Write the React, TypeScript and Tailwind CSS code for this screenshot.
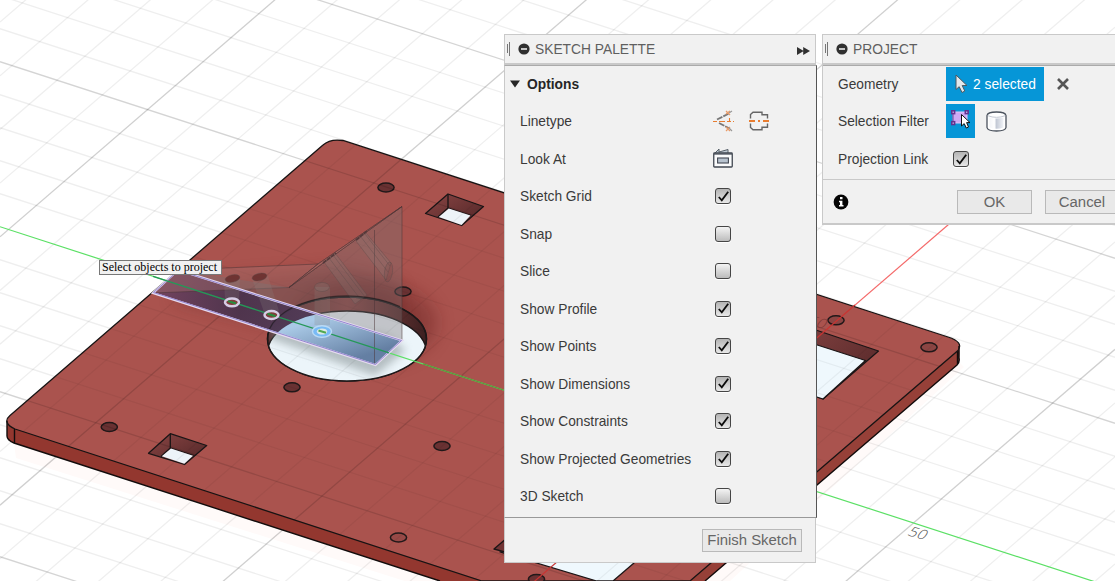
import type { ReactNode } from "react";

const W = 1115;
const GRID_A = 0.3243;
const GRID_B = -0.862;

function GridLines() {
  const lines: ReactNode[] = [];
  for (let k = -13; k <= 11; k++) {
    if (k === 0) continue;
    const y = 226.7 + 33 * k;
    lines.push(
      <line key={"a" + k} x1={0} y1={y} x2={W} y2={y + GRID_A * W} stroke="#000" strokeOpacity={k % 5 === 0 ? 0.17 : 0.065} strokeWidth={1.3} />
    );
  }
  for (let k = -19; k <= 9; k++) {
    if (k === 0) continue;
    const y = 1042 + 53.68 * k;
    lines.push(
      <line key={"b" + k} x1={0} y1={y} x2={W} y2={y + GRID_B * W} stroke="#000" strokeOpacity={k % 5 === 0 ? 0.19 : 0.065} strokeWidth={1.3} />
    );
  }
  return <g>{lines}</g>;
}

const HOLES = [
  [386, 187.5], [403, 291.5], [292, 387.3], [109.3, 427], [442, 446], [398.5, 537.5], [836, 320.3], [929, 347.3], [536.5, 579],
];

const TOP_FACE =
  "M7 422 Q6 419 10 415.5 L323 145 Q330 138.5 343 140.5 L948 337 Q964 342 958 350.5 L690 581 L482 581 L15 429 Q8 426 7 422Z";

function Scene() {
  return (
    <svg className="absolute inset-0" width="1115" height="581" viewBox="0 0 1115 581">
      <defs>
        <clipPath id="bigHole"><ellipse cx="347" cy="339" rx="79" ry="42" /></clipPath>
        <clipPath id="opening" clipPath="url(#bigHole)"><ellipse cx="347" cy="353" rx="79.5" ry="42" /></clipPath>
        <clipPath id="plate"><path d={TOP_FACE} /></clipPath>
        <linearGradient id="wall" x1="0" x2="1">
          <stop offset="0" stopColor="#582b2c" />
          <stop offset=".5" stopColor="#8d4543" />
          <stop offset="1" stopColor="#3c2021" />
        </linearGradient>
        <linearGradient id="strip" x1="153" y1="290" x2="402" y2="345" gradientUnits="userSpaceOnUse">
          <stop offset="0" stopColor="#6e4260" />
          <stop offset=".35" stopColor="#49334e" />
          <stop offset="1" stopColor="#584767" />
        </linearGradient>
        <linearGradient id="stripOpen" x1="330" y1="315" x2="345" y2="362" gradientUnits="userSpaceOnUse">
          <stop offset="0" stopColor="#a9c9e6" />
          <stop offset="1" stopColor="#647fa3" />
        </linearGradient>
        <linearGradient id="pocket" x1="0" y1="0" x2="1" y2="1">
          <stop offset="0" stopColor="#8a4544" />
          <stop offset="1" stopColor="#4f2526" />
        </linearGradient>
        <filter id="soft" x="-20%" y="-20%" width="140%" height="140%"><feGaussianBlur stdDeviation="4" /></filter>
        <filter id="softer" x="-50%" y="-50%" width="200%" height="200%"><feGaussianBlur stdDeviation="9" /></filter>
      </defs>
      <rect width="1115" height="581" fill="#fff" />
      <path d="M14 443 L440 581 L490 608 L16 458Z M705 581 L959 362 L964 367 L730 581Z" fill="#fffaf9" />
      <GridLines />
      <line x1="0" y1="1042" x2="1115" y2="81" stroke="#f46a6a" strokeWidth="1.2" />

      <path d="M7 421 V436 Q7 440 14 443 L440 581 H705 L957 365 Q960 362 959 346 L700 470 Z" fill="#93372f" />
      <path d="M958 350 L690 581 H705 L957 365 Q960 363 959 346Z" fill="#964038" />
      <path d={TOP_FACE} fill="#aa534e" />
      <g clipPath="url(#plate)">
        <ellipse cx="365" cy="323" rx="72" ry="42" fill="#571717" opacity=".36" filter="url(#softer)" />
        <path d="M195 282 L340 268 L400 285 L405 330 L320 338 L170 300Z" fill="#541c1c" opacity=".3" filter="url(#softer)" />
      </g>
      <path d="M7 421 V436 Q7 440 14 443 L440 581 M14.5 429 V443 M705 581 L957 365 Q960 362 959 358 V346 M957.5 351 V364" fill="none" stroke="#120c0c" strokeWidth="1.4" />
      <path d={TOP_FACE} fill="none" stroke="#181414" strokeWidth="1.3" />

      <g stroke="#1b1516" strokeWidth="1.3" strokeLinejoin="round">
        <path d="M448 194 L483.5 206.5 L461.7 225.5 L425.5 213.5Z" fill="url(#pocket)" />
        <path d="M448 194 V208 L471 215.5 M448 208 L438 217" fill="none" />
        <path d="M170.3 433.7 L206.7 445.5 L184.5 464.5 L148.5 453.3Z" fill="url(#pocket)" />
        <path d="M170.3 434 V448 L193.5 455.5 M170.3 448 L161 456.5" fill="none" />
        <path d="M780 318 L878.5 351 L823 399 L780 385Z" fill="url(#pocket)" />
        <path d="M780 333 L865.5 360.5 L823 399 L780 385Z" fill="#eff8fd" />
        <path d="M515 531 L494 549 L520 556Z" fill="#713334" />
        <path d="M500 552 L596.7 581 L613 581 L634 563 L650 540Z" fill="#eff8fd" />
      </g>
      <path d="M448.8 208.5 L470.5 215.5 L461.5 225 L438.8 217Z M171 448.5 L193 455.7 L184.3 463.8 L161.8 456.3Z" fill="#edf3f8" />

      {HOLES.map(([x, y]) => (
        <ellipse key={x} cx={x} cy={y} rx="8.1" ry="4.5" fill={x > 800 ? "#8b4543" : x === 398.5 ? "#974947" : "#693132"} stroke="#211819" strokeWidth="1.5" />
      ))}

      <ellipse cx="347" cy="339" rx="79.5" ry="42" fill="url(#wall)" stroke="#1d1819" strokeWidth="1.5" />
      <g clipPath="url(#bigHole)">
        <ellipse cx="347" cy="353" rx="79.5" ry="42" fill="#ecf5fa" stroke="#1d1819" strokeWidth="1.3" />
        <path d="M268 338 L375 376 L406 350 L385 335 L330 330 L270 328Z" fill="#7b8688" opacity=".5" filter="url(#soft)" />
      </g>
      <ellipse cx="347" cy="339" rx="79.5" ry="42" fill="none" stroke="#1d1819" strokeWidth="1.3" />

      <g clipPath="url(#plate)" opacity=".75"><GridLines /></g>

      <line x1="520" y1="593.8" x2="855" y2="305" stroke="#c93432" strokeWidth="1.2" />
      <line x1="0" y1="226.7" x2="1115" y2="588.3" stroke="#5be065" strokeWidth="1.2" />
      <line x1="423" y1="363.9" x2="505" y2="390.5" stroke="#5f963c" strokeWidth="1.3" />

      <path d="M153 293 L178 270 L402 340.5 L375.5 365Z" fill="url(#strip)" fillOpacity=".92" />
      <g clipPath="url(#opening)">
        <path d="M153 293 L178 270 L402 340.5 L375.5 365Z" fill="url(#stripOpen)" />
      </g>
      <g stroke="#4a3435" strokeOpacity=".5" strokeWidth="1">
        <path d="M178 270 L318 264 L289 287.5 L153 293Z" fill="#a6706d" fillOpacity=".42" />
        <path d="M178 270 L289 287.5 L402 206.5 V340.5Z" fill="#777071" fillOpacity=".36" stroke="none" />
        <path d="M289 287.5 L402 206.5 V340 M289 287.5 L318 264 L402 206.5 M374.5 230 V364" fill="none" />
        <path d="M318 264 L402 206.5 L289 287.5Z" fill="#b98682" fillOpacity=".4" />
      </g>
      <g fill="#898381" fillOpacity=".22" stroke="#594a4a" strokeOpacity=".4" strokeWidth=".9">
        <path d="M224 280 L225 300 Q232 305 239 300 L240 278Z" stroke="none" />
        <path d="M252 279 L264 312 Q273 316 279 311 L268 276Z" stroke="none" />
        <path d="M314.5 287 V325 H330 V287Z" stroke="none" />
        <ellipse cx="322" cy="287" rx="7.5" ry="4.5" />
        <path d="M324 262 L335 253 L367 295 L355 304Z M329 258 L361 300 M333 255 L365 297" />
        <path d="M356 241 L366 233 L391 263 L386 280Z M361 237 L388 272 M365 234 L390 266" />
        <ellipse cx="388.5" cy="272" rx="4" ry="10" transform="rotate(8 388.5 272)" fill="#713f3e" />
        <ellipse cx="232.5" cy="278.5" rx="7.5" ry="3.7" transform="rotate(-12 232.5 278.5)" fill="#69302f" fillOpacity=".9" />
        <ellipse cx="259.5" cy="277" rx="7.5" ry="3.7" transform="rotate(-12 259.5 277)" fill="#69302f" fillOpacity=".9" />
      </g>
      <path d="M268 341 A79.5 42 0 0 1 400 306.5" fill="none" stroke="#1d1819" strokeOpacity=".6" strokeWidth="1.2" />
      <path d="M323 263 L336 253 M356 240 L367 231" stroke="#54393a" strokeWidth="1.8" strokeDasharray="4 1" />
      <path d="M153 293 L178 270 L402 340.5 L375.5 365Z" fill="none" stroke="#e6dbf0" strokeWidth="2.3" />
      <path d="M153.5 292.5 L178.5 270.5 L401.5 340.5 L375.5 364.5Z" fill="none" stroke="#8a7cce" strokeWidth=".9" />
      <line x1="153" y1="276.3" x2="389" y2="352.9" stroke="#259858" strokeWidth="1.3" />
      <g fill="#813f3d">
        {[[232, 302.3], [271.5, 315]].map(([x, y]) => (
          <g key={x}>
            <ellipse cx={x} cy={y} rx="7" ry="3.9" stroke="#d7cde6" strokeWidth="2.5" />
            <path d={`M${x - 4} ${y - 1.2} L${x + 4} ${y + 1.2}`} stroke="#258d3e" strokeWidth="2" />
          </g>
        ))}
      </g>
      <ellipse cx="322" cy="331.5" rx="9.5" ry="5.8" fill="#78baf5" stroke="#bbdaf5" strokeWidth="1.4" />
      <ellipse cx="322" cy="331.5" rx="5.2" ry="3.1" fill="#dce9e8" />
      <path d="M318.5 330.5 L326 332.8" stroke="#50a951" strokeWidth="2.2" />

      <text x="0" y="0" transform="matrix(.95 .27 -.55 .75 906.5 535)" fontFamily="'Open Sans', sans-serif" fontSize="16" fontWeight="300" fill="#555">50</text>
      <text x="0" y="0" transform="matrix(.95 .27 -.55 .75 806 324)" fontFamily="'Open Sans', sans-serif" fontSize="16" fontWeight="300" fill="#7d3836">50</text>
    </svg>
  );
}

function Checkbox({ on = false }: { on?: boolean }) {
  return (
    <span className={"relative top-[0.5px] flex size-4 items-center justify-center rounded-[3px] border-[1.5px] border-[#454545] shadow-[0_1px_0_#fff] " + (on ? "bg-linear-to-b from-[#b4b4b4] to-[#e8e8e8]" : "bg-linear-to-b from-[#f4f4f4] to-[#bcbcbc]")}>
      {on && (
        <svg width="13" height="13" viewBox="0 0 13 13" className="shrink-0">
          <path d="M1.8 7 L4.8 10.4 L11.2 1.8" fill="none" stroke="#0c0c0c" strokeWidth="1.8" />
        </svg>
      )}
    </span>
  );
}

function Header({ title, expand = false }: { title: string; expand?: boolean }) {
  return (
    <div className="flex h-[30px] shrink-0 items-center border-b-2 border-[#c9c9c9] pl-[2px] pr-[5px] text-[13.8px] text-[#5f5f5f]">
      <svg width="5" height="16" viewBox="0 0 5 16" className="mr-[6px]">
        <path d="M.5 3 V12 M2.5 1 V15" stroke="#777" />
      </svg>
      <svg width="12" height="12" viewBox="0 0 12 12" className="mr-[5px]">
        <circle cx="6" cy="6" r="5.6" fill="#303030" />
        <path d="M3 6 H9" stroke="#eee" strokeWidth="1.6" />
      </svg>
      <span className="pt-[2px] leading-[18px]">{title}</span>
      {expand && (
        <svg width="13" height="8" viewBox="0 0 13 8" className="mt-[3px] ml-auto">
          <path d="M0 0 L6.7 4 L0 8Z M6.2 0 L13 4 L6.2 8Z" fill="#303030" />
        </svg>
      )}
    </div>
  );
}

function LinetypeIcons() {
  return (
    <div className="flex items-center gap-[15px] pl-px">
      <svg width="21" height="22" viewBox="0 0 21 22">
        <path d="M4 9.5 L15.5 3.8 M6 13 L16 18.2" stroke="#777" strokeWidth="1.8" strokeDasharray="6 1" />
        <path d="M0 11.5 H21" stroke="#e87d30" strokeWidth="1.1" strokeDasharray="4 2 6 2" />
        <path d="M16.5 8 V12" stroke="#e87d30" strokeWidth="1.1" />
        <path d="M13 1 L17 5 M17 1 L13 4 M13 17 L17 21 M17 17 L13 21" stroke="#e99b68" strokeWidth="1.2" />
        <path d="M16 3 L19 1 M16 18 L19 21" stroke="#999" strokeWidth="1.2" />
      </svg>
      <svg width="20" height="20" viewBox="0 0 20 20">
        <path d="M1.5 7.5 V3.5 L4 1.2 H13 V3.8 H18.5 V7.5 M1.5 12.5 V16.5 L4 18.8 H13 V16.2 H18.5 V12.5" fill="none" stroke="#666" strokeWidth="1.4" />
        <path d="M0 10 H6 M9 10 H11 M14 10 H20" stroke="#e87d30" strokeWidth="2" />
      </svg>
    </div>
  );
}

function LookAtIcon() {
  return (
    <svg width="20" height="20" viewBox="0 0 20 20" className="ml-px">
      <path d="M2 5 L6 1 V4 L15 1.5 V5" fill="#c0cbd4" stroke="#555e67" />
      <rect x=".75" y="5" width="18.5" height="14" rx=".8" fill="#fafbfc" stroke="#424852" strokeWidth="1.3" />
      <path d="M1 6 H19" stroke="#424852" strokeWidth="1.2" />
      <rect x="4.6" y="10" width="10.8" height="5" fill="#b8c3cf" stroke="#424852" strokeWidth="1.1" />
    </svg>
  );
}

const OPTIONS: [string, boolean][] = [
  ["Sketch Grid", true],
  ["Snap", false],
  ["Slice", false],
  ["Show Profile", true],
  ["Show Points", true],
  ["Show Dimensions", true],
  ["Show Constraints", true],
  ["Show Projected Geometries", true],
  ["3D Sketch", false],
];

function OptionRow({ label, children }: { label: string; children: ReactNode }) {
  return (
    <div className="flex h-[37.5px] items-center">
      <span className="w-[192px] pt-[4px] whitespace-nowrap">{label}</span>
      {children}
    </div>
  );
}

function SketchPalette() {
  return (
    <section className="absolute top-[34px] left-[504px] flex h-[529px] w-[313px] flex-col text-[#3a3a3a]">
      <div className="mr-px border border-b-0 border-[#c9c9c9] bg-[#f1f1f1]">
        <Header title="SKETCH PALETTE" expand />
      </div>
      <div className="flex h-[453px] shrink-0 flex-col border-x border-y border-t-[#aaa] border-r-[#555] border-b-[#999] border-l-[#c9c9c9] bg-[#f1f1f1] pl-[15px] text-[13.75px]">
        <div className="-ml-[10px] flex h-[36px] items-center gap-[7px] text-[13.8px] font-bold text-[#262626]">
          <svg width="10" height="8" viewBox="0 0 10 8"><path d="M0 .5 H10 L5 7.5Z" fill="#262626" /></svg>
          <span className="pt-[2px]">Options</span>
        </div>
        <OptionRow label="Linetype"><LinetypeIcons /></OptionRow>
        <OptionRow label="Look At"><LookAtIcon /></OptionRow>
        {OPTIONS.map(([label, on]) => (
          <OptionRow key={label} label={label}>
            <span className="ml-[3px]"><Checkbox on={on} /></span>
          </OptionRow>
        ))}
      </div>
      <div className="mr-px flex grow items-center justify-end border border-t-0 border-[#c9c9c9] bg-[#f1f1f1] pr-[13px]">
        <button className="h-[23px] w-[100px] border border-[#b9b9b9] bg-[#e9e9e9] text-[14.9px] leading-[21px] whitespace-nowrap text-[#666]">Finish Sketch</button>
      </div>
    </section>
  );
}

function CursorArrow() {
  return (
    <svg width="13" height="20" viewBox="0 0 13 20">
      <path d="M1 1 V15.5 L4.2 12.7 L7 18.5 L9.8 17 L7.2 11.5 H12Z" fill="#e2e8ec" stroke="#4d5960" strokeWidth="1" />
    </svg>
  );
}

function ProfileFilterIcon() {
  return (
    <svg width="20" height="20" viewBox="0 0 20 20">
      <path d="M2 2 H16 V13 H2Z" fill="#cda9f4" stroke="#dfc8fa" />
      <g fill="#e4cff9" stroke="#603391" strokeWidth="1.6">
        <rect x=".8" y=".8" width="2.8" height="2.8" />
        <rect x="14.3" y=".8" width="2.8" height="2.8" />
        <rect x=".8" y="11.7" width="2.8" height="2.8" />
      </g>
      <path d="M2 4 V11" stroke="#603391" />
      <path d="M10.5 4.5 V16 L13.2 13.6 L15.3 18 L17.5 17 L15.6 12.6 H19Z" fill="#fff" stroke="#111" strokeWidth="1" />
    </svg>
  );
}

function BodyFilterIcon() {
  return (
    <svg width="21" height="21" viewBox="0 0 21 21">
      <defs>
        <linearGradient id="cyl"><stop stopColor="#f4f5f8" /><stop offset=".35" stopColor="#fff" /><stop offset=".5" stopColor="#c4cad6" /><stop offset="1" stopColor="#f2f4f8" /></linearGradient>
      </defs>
      <path d="M1 4.5 Q1.5 1 10.5 1 Q19.5 1 20 4.5 V16.5 Q19.5 20 10.5 20 Q1.5 20 1 16.5Z" fill="#fff" stroke="#4b525d" strokeWidth="1.3" />
      <path d="M3.5 6.5 Q10.5 8.5 17.5 6.5 V16.5 Q10.5 19 3.5 16.5Z" fill="url(#cyl)" />
      <path d="M1.8 4.7 Q10.5 8 19.2 4.7" fill="none" stroke="#c3c8d2" />
    </svg>
  );
}

function ProjectDialog() {
  return (
    <section className="absolute top-[34px] left-[822px] flex h-[191px] w-[300px] flex-col border border-b-2 border-[#c9c9c9] bg-[#f1f1f1] text-[13.75px] text-[#3a3a3a]">
      <Header title="PROJECT" />
      <div className="flex h-[114px] shrink-0 flex-col border-t border-t-[#aaa] pl-[15px]">
        <div className="flex h-[36px] items-center">
          <span className="w-[108px] pt-[3px]">Geometry</span>
          <span className="flex h-[34px] w-[98px] shrink-0 items-center bg-[#0696d7] pl-[9px] text-[13.8px] text-white">
            <CursorArrow />
            <span className="ml-[5px] pt-[2px] whitespace-nowrap">2 selected</span>
          </span>
          <svg width="12" height="12" viewBox="0 0 12 12" className="ml-[13px]">
            <path d="M1 1 L11 11 M11 1 L1 11" stroke="#555" strokeWidth="2.6" />
          </svg>
        </div>
        <div className="flex h-[38px] items-center">
          <span className="w-[108px] pt-[3px] whitespace-nowrap">Selection Filter</span>
          <span className="flex h-[34px] w-[29px] items-start justify-center bg-[#0696d7] pt-[6px]"><ProfileFilterIcon /></span>
          <span className="ml-[11px]"><BodyFilterIcon /></span>
        </div>
        <div className="flex h-[37px] items-center">
          <span className="w-[115px] pt-[4px] whitespace-nowrap">Projection Link</span>
          <Checkbox on />
        </div>
      </div>
      <div className="flex grow items-center border-t border-[#c9c9c9] pl-[10px] text-[14.9px] text-[#666]">
        <svg width="16" height="16" viewBox="0 0 16 16">
          <circle cx="8" cy="8" r="7.4" fill="#050505" />
          <path d="M7 3 H9.5 V5.3 H7Z M6 6.7 H9.4 V11 H10.5 V12.5 H6 V11 H7 V8.2 H6Z" fill="#fff" />
        </svg>
        <button className="ml-[108px] h-[24px] w-[75px] border border-[#b9b9b9] bg-[#e9e9e9] leading-[20px]">OK</button>
        <button className="ml-[13px] h-[24px] w-[74px] shrink-0 border border-[#b9b9b9] bg-[#e9e9e9] leading-[20px]">Cancel</button>
      </div>
    </section>
  );
}

export default function App() {
  return (
    <main className="relative h-[581px] w-[1115px] overflow-hidden bg-white font-['Liberation_Sans',Arial,sans-serif]">
      <Scene />
      <div className="absolute top-[260px] left-[99px] h-[15px] w-[123px] border border-[#777] bg-[#f1f1f1] pl-[2px] font-['Liberation_Serif',serif] text-[12px] leading-[13px] whitespace-nowrap text-black">
        Select objects to project
      </div>
      <SketchPalette />
      <ProjectDialog />
    </main>
  );
}
